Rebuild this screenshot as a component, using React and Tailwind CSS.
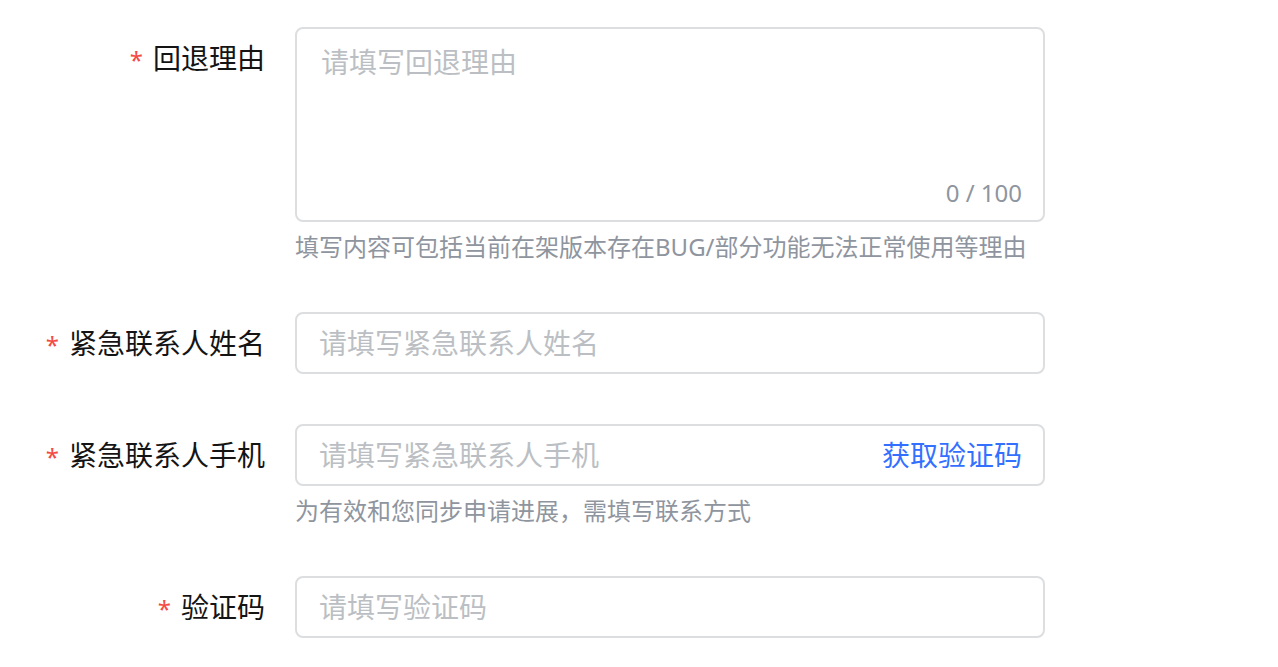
import React, { useState } from "react";

const font = { fontFamily: '"Noto Sans", "Noto Sans CJK SC", sans-serif' };

const Label = ({ children }) => (
  <div className="flex justify-end items-center h-[62px] pr-[30px]">
    <span className="text-[#f54a45] text-[24px] leading-none mr-[10px] mt-[4px]">*</span>
    <span className="text-[28px] text-[#141414] leading-[62px]">{children}</span>
  </div>
);

const Hint = ({ children }) => (
  <div className="mt-[8px] text-[24px] leading-[34px] text-[#8f959e]">{children}</div>
);

export default function App() {
  const [reason, setReason] = useState("");
  const [name, setName] = useState("");
  const [phone, setPhone] = useState("");
  const [code, setCode] = useState("");

  return (
    <div className="bg-white w-[1278px] h-[667px] overflow-hidden pt-[27px]" style={font}>
      <div className="grid grid-cols-[295px_750px]">
        {/* 回退理由 */}
        <Label>回退理由</Label>
        <div className="mb-[48px]">
          <div className="relative h-[195px] border-2 border-[#dcdee0] rounded-[8px]">
            <textarea
              value={reason}
              maxLength={100}
              onChange={(e) => setReason(e.target.value)}
              placeholder="请填写回退理由"
              className="w-full h-full resize-none outline-none bg-transparent px-[24px] pt-[13px] text-[28px] leading-[40px] text-[#1f2329] placeholder:text-[#bbbfc4]"
            />
            <span className="absolute right-[21px] bottom-[10px] text-[24px] leading-[34px] text-[#8f959e]">
              {reason.length} / 100
            </span>
          </div>
          <Hint>填写内容可包括当前在架版本存在BUG/部分功能无法正常使用等理由</Hint>
        </div>

        {/* 紧急联系人姓名 */}
        <Label>紧急联系人姓名</Label>
        <div className="mb-[50px]">
          <input
            value={name}
            onChange={(e) => setName(e.target.value)}
            placeholder="请填写紧急联系人姓名"
            className="w-full h-[62px] border-2 border-[#dcdee0] rounded-[8px] px-[22px] text-[28px] text-[#1f2329] outline-none placeholder:text-[#bbbfc4]"
          />
        </div>

        {/* 紧急联系人手机 */}
        <Label>紧急联系人手机</Label>
        <div className="mb-[48px]">
          <div className="flex items-center h-[62px] border-2 border-[#dcdee0] rounded-[8px] pl-[22px] pr-[21px]">
            <input
              value={phone}
              onChange={(e) => setPhone(e.target.value)}
              placeholder="请填写紧急联系人手机"
              className="flex-1 min-w-0 h-full text-[28px] text-[#1f2329] outline-none placeholder:text-[#bbbfc4]"
            />
            <button className="text-[28px] text-[#3370ff] whitespace-nowrap">获取验证码</button>
          </div>
          <Hint>为有效和您同步申请进展，需填写联系方式</Hint>
        </div>

        {/* 验证码 */}
        <Label>验证码</Label>
        <div>
          <input
            value={code}
            onChange={(e) => setCode(e.target.value)}
            placeholder="请填写验证码"
            className="w-full h-[62px] border-2 border-[#dcdee0] rounded-[8px] px-[22px] text-[28px] text-[#1f2329] outline-none placeholder:text-[#bbbfc4]"
          />
        </div>
      </div>
    </div>
  );
}
